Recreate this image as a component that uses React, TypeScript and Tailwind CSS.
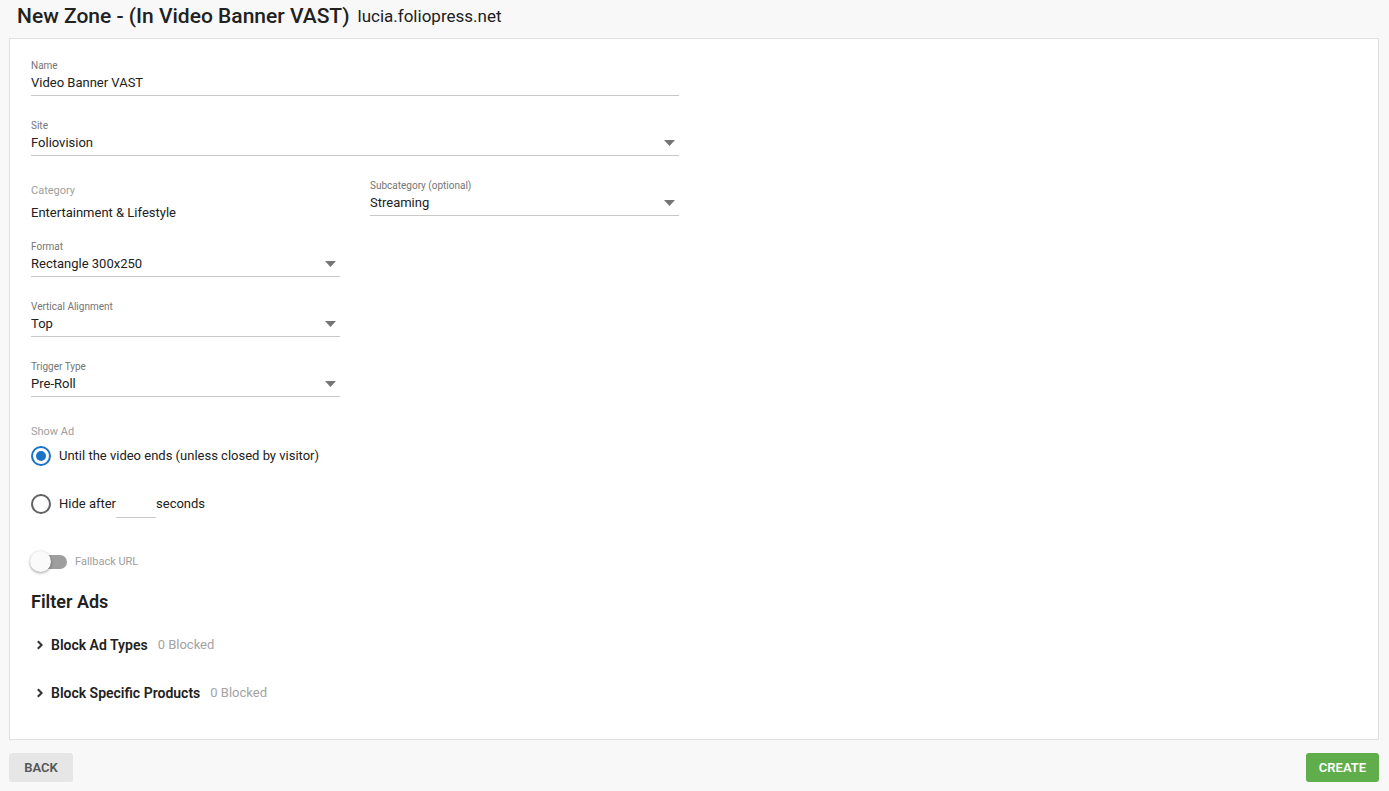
import React from "react";

type FieldProps = {
  label: string;
  value: string;
  select?: boolean;
  width?: string;
};

const Caret = () => (
  <svg width="11" height="6" viewBox="0 0 11 6" className="mr-[4px]">
    <path d="M0 0 L11 0 L5.5 6 Z" fill="#757575" />
  </svg>
);

const Field = ({ label, value, select = true, width = "w-[648px]" }: FieldProps) => {
  return (
    <div className={`${width} flex flex-col`}>
      <div className="text-[10px] leading-[12px] text-[#757575]">{label}</div>
      <div className="h-[24px] flex items-center justify-between border-b border-[#c8c8c8] pb-[1px]">
        <span className="text-[13px] text-[#212121]">{value}</span>
        {select && <Caret />}
      </div>
    </div>
  );
};

const Chevron = () => (
  <svg width="8" height="10" viewBox="0 0 8 10" className="mr-[7px]">
    <path d="M1.8 1.2 L5.6 5 L1.8 8.8" stroke="#333" strokeWidth="2" fill="none" />
  </svg>
);

const FilterRow = ({ title }: { title: string }) => (
  <div className="flex items-center h-[20px] pl-[5px]">
    <Chevron />
    <span className="text-[14px] font-semibold text-[#212121]">{title}</span>
    <span className="text-[13px] text-[#a3a3a3] ml-[10px]">0 Blocked</span>
  </div>
);

export default function App() {
  return (
    <div
      className="min-h-screen bg-[#f8f8f8] px-[9px] pr-[10px]"
      style={{ fontFamily: "Roboto, 'Liberation Sans', sans-serif" }}
    >
      <div className="h-[34px] flex items-center pl-[8px] gap-[8px]">
        <span className="text-[21px] font-medium text-[#212121]">
          New Zone - (In Video Banner VAST)
        </span>
        <span className="text-[17px] text-[#212121]">lucia.foliopress.net</span>
      </div>
      <div className="mt-[4px] h-[702px] bg-white border border-[#e0e0e0] pl-[21px] pt-[21px]">
        <Field label="Name" value="Video Banner VAST" select={false} />
        <div className="mt-[24px]">
          <Field label="Site" value="Foliovision" />
        </div>
        <div className="mt-[24px] flex items-start gap-[30px] w-[648px] h-[38px]">
          <div className="w-[309px] flex flex-col">
            <div className="text-[11px] leading-[12px] text-[#9e9e9e] mt-[5px]">Category</div>
            <div className="text-[13px] text-[#212121] leading-[20px] mt-[6px]">
              Entertainment &amp; Lifestyle
            </div>
          </div>
          <Field label="Subcategory (optional)" value="Streaming" width="w-[309px]" />
        </div>
        <div className="mt-[23px]">
          <Field label="Format" value="Rectangle 300x250" width="w-[309px]" />
        </div>
        <div className="mt-[24px]">
          <Field label="Vertical Alignment" value="Top" width="w-[309px]" />
        </div>
        <div className="mt-[24px]">
          <Field label="Trigger Type" value="Pre-Roll" width="w-[309px]" />
        </div>

        <div className="mt-[29px] text-[11px] leading-[12px] text-[#9e9e9e]">Show Ad</div>
        <div className="mt-[8px] flex items-center h-[20px]">
          <div className="w-[20px] h-[20px] rounded-full border-[2px] border-[#1a73c7] flex items-center justify-center">
            <div className="w-[10px] h-[10px] rounded-full bg-[#1a73c7]" />
          </div>
          <span className="ml-[8px] text-[13px] text-[#212121]">
            Until the video ends (unless closed by visitor)
          </span>
        </div>
        <div className="mt-[28px] flex items-center h-[20px]">
          <div className="w-[20px] h-[20px] rounded-full border-[2px] border-[#616161]" />
          <span className="ml-[8px] text-[13px] text-[#212121]">Hide after</span>
          <div className="w-[40px] h-[24px] border-b border-[#c8c8c8] mt-[4px]" />
          <span className="text-[13px] text-[#212121]">seconds</span>
        </div>

        <div className="mt-[37px] flex items-center h-[22px]">
          <div className="relative w-[36px] h-[14px] rounded-full bg-[#9e9e9e]">
            <div className="absolute left-[-1px] top-[-4px] w-[21px] h-[21px] rounded-full bg-[#fafafa] shadow-[0_1px_3px_rgba(0,0,0,0.4)]" />
          </div>
          <span className="ml-[8px] text-[11px] text-[#9e9e9e]">Fallback URL</span>
        </div>

        <div className="mt-[17px] text-[18px] font-semibold text-[#212121] leading-[24px]">
          Filter Ads
        </div>
        <div className="mt-[21px]">
          <FilterRow title="Block Ad Types" />
        </div>
        <div className="mt-[28px]">
          <FilterRow title="Block Specific Products" />
        </div>
      </div>
      <div className="mt-[13px] flex justify-between">
        <button className="w-[64px] h-[29px] rounded-[3px] bg-[#e6e6e6] text-[13px] font-semibold text-[#555]">
          BACK
        </button>
        <button className="w-[73px] h-[29px] rounded-[3px] bg-[#5fae4b] text-[13px] font-semibold text-white">
          CREATE
        </button>
      </div>
    </div>
  );
}
